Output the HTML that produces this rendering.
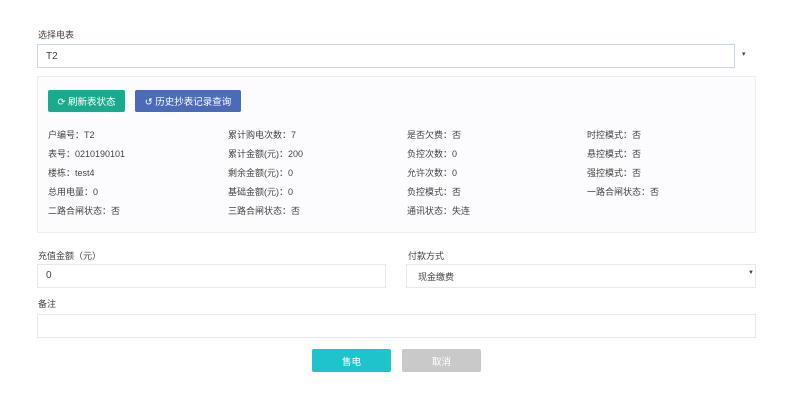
<html><head><style>
body{margin:0;width:799px;height:402px;background:#fff;font-family:"Liberation Sans","Noto Sans CJK SC",sans-serif;font-size:9px;color:#444;position:relative;overflow:hidden}
.a{position:absolute}
.box{position:absolute;border:1px solid #e6e9f0;background:#fff;box-sizing:border-box}
.btn{position:absolute;color:#fff;font-size:9.5px;display:flex;align-items:center;justify-content:center;border-radius:2px}
.r{position:absolute;white-space:nowrap}
</style></head><body>
<div class="a" style="left:38px;top:28px">选择电表</div>
<div class="box" style="left:37px;top:44px;width:698px;height:24px;border-color:#c9d6ee"></div>
<div class="a" style="left:46px;top:51px;font-size:10px">T2</div>
<div class="a" style="left:742px;top:50px;font-size:7px">▾</div>
<div class="box" style="left:37px;top:76px;width:719px;height:157px;background:#fcfcfe;border-color:#eceef3"></div>
<div class="btn" style="left:48px;top:90px;width:77px;height:22px;background:#1aab8e">⟳ 刷新表状态</div>
<div class="btn" style="left:135px;top:90px;width:106px;height:22px;background:#4a6cb8">↺ 历史抄表记录查询</div>
<div class="r" style="left:48px;top:128px">户编号：T2</div>
<div class="r" style="left:228px;top:128px">累计购电次数：7</div>
<div class="r" style="left:407px;top:128px">是否欠费：否</div>
<div class="r" style="left:587px;top:128px">时控模式：否</div>
<div class="r" style="left:48px;top:147px">表号：0210190101</div>
<div class="r" style="left:228px;top:147px">累计金额(元)：200</div>
<div class="r" style="left:407px;top:147px">负控次数：0</div>
<div class="r" style="left:587px;top:147px">悬控模式：否</div>
<div class="r" style="left:48px;top:166px">楼栋：test4</div>
<div class="r" style="left:228px;top:166px">剩余金额(元)：0</div>
<div class="r" style="left:407px;top:166px">允许次数：0</div>
<div class="r" style="left:587px;top:166px">强控模式：否</div>
<div class="r" style="left:48px;top:185px">总用电量：0</div>
<div class="r" style="left:228px;top:185px">基础金额(元)：0</div>
<div class="r" style="left:407px;top:185px">负控模式：否</div>
<div class="r" style="left:587px;top:185px">一路合闸状态：否</div>
<div class="r" style="left:48px;top:204px">二路合闸状态：否</div>
<div class="r" style="left:228px;top:204px">三路合闸状态：否</div>
<div class="r" style="left:407px;top:204px">通讯状态：失连</div>
<div class="a" style="left:38px;top:249px">充值金额（元）</div>
<div class="box" style="left:37px;top:264px;width:349px;height:24px"></div>
<div class="a" style="left:46px;top:270px;font-size:10px">0</div>
<div class="a" style="left:408px;top:249px">付款方式</div>
<div class="box" style="left:406px;top:264px;width:350px;height:24px"></div>
<div class="a" style="left:418px;top:270px">现金缴费</div>
<div class="a" style="left:748px;top:270px;font-size:6px">▼</div>
<div class="a" style="left:38px;top:297px">备注</div>
<div class="box" style="left:37px;top:314px;width:719px;height:24px"></div>
<div class="btn" style="left:312px;top:349px;width:79px;height:23px;background:#1fc3cb">售电</div>
<div class="btn" style="left:402px;top:349px;width:79px;height:23px;background:#c9c9c9">取消</div>
</body></html>
